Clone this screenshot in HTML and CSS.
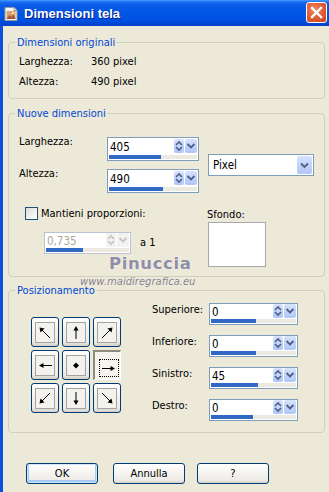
FILE: index.html
```html
<!DOCTYPE html>
<html lang="it">
<head>
<meta charset="utf-8">
<title>Dimensioni tela</title>
<link rel="stylesheet" href="styles.css">
</head>
<body>
<div class="window">
  <div class="titlebar">
    <svg class="app-icon" width="16" height="16" viewBox="0 0 16 16">
      <path d="M2 1.5h9l3 3v10H2z" fill="#f4f4f0" stroke="#9a9a9a"/>
      <path d="M11 1.5v3h3" fill="#dcdcdc" stroke="#9a9a9a"/>
      <rect x="3.5" y="5" width="9" height="8" fill="#d9a070"/>
      <path d="M3.5 13l3-4 2 2 2-3 2 5z" fill="#a4583a"/>
      <circle cx="10" cy="7" r="1.3" fill="#f6e2c4"/>
    </svg>
    <span class="title">Dimensioni tela</span>
    <div class="close">
      <svg width="13" height="13" viewBox="0 0 13 13"><path d="M2 2l9 9M11 2l-9 9" stroke="#fff" stroke-width="2.4" stroke-linecap="square"/></svg>
    </div>
  </div>

  <div class="main">
    <fieldset class="group g1">
      <legend>Dimensioni originali</legend>
      <div class="info-row"><span class="info-lbl">Larghezza:</span><span>360 pixel</span></div>
      <div class="info-row"><span class="info-lbl">Altezza:</span><span>490 pixel</span></div>
    </fieldset>

    <fieldset class="group g2">
      <legend>Nuove dimensioni</legend>
      <div class="nd-top">
        <div class="nd-fields">
          <span class="fld-lbl">Larghezza:</span>
          <div class="spin big">
            <div class="spin-top"><span class="spin-val">405</span><span class="ud"><svg width="10" height="14" viewBox="0 0 10 14"><path d="M2 6l3-3 3 3M2 8l3 3 3-3" fill="none" stroke="#4d6185" stroke-width="1.6"/></svg></span><span class="dd"><svg width="12" height="14" viewBox="0 0 12 14"><path d="M2.5 5l3.5 3.5 3.5-3.5" fill="none" stroke="#4d6185" stroke-width="1.8"/></svg></span></div>
            <div class="track"><div class="fill" style="width:52px"></div></div>
          </div>
          <span class="fld-lbl">Altezza:</span>
          <div class="spin big">
            <div class="spin-top"><span class="spin-val">490</span><span class="ud"><svg width="10" height="14" viewBox="0 0 10 14"><path d="M2 6l3-3 3 3M2 8l3 3 3-3" fill="none" stroke="#4d6185" stroke-width="1.6"/></svg></span><span class="dd"><svg width="12" height="14" viewBox="0 0 12 14"><path d="M2.5 5l3.5 3.5 3.5-3.5" fill="none" stroke="#4d6185" stroke-width="1.8"/></svg></span></div>
            <div class="track"><div class="fill" style="width:54px"></div></div>
          </div>
        </div>
        <div class="select">
          <span class="select-val">Pixel</span>
          <span class="select-btn"><svg width="15" height="18" viewBox="0 0 15 18"><path d="M4 7.5l3.5 3.5 3.5-3.5" fill="none" stroke="#4d6185" stroke-width="1.8"/></svg></span>
        </div>
      </div>
      <div class="nd-bottom">
        <div class="nd-left">
          <div class="check-row"><span class="checkbox"></span><span>Mantieni proporzioni:</span></div>
          <div class="ratio-row">
            <div class="spin small disabled">
              <div class="spin-top"><span class="spin-val">0,735</span><span class="ud"><svg width="10" height="14" viewBox="0 0 10 14"><path d="M2 6l3-3 3 3M2 8l3 3 3-3" fill="none" stroke="#c4c4c4" stroke-width="1.6"/></svg></span><span class="dd"><svg width="12" height="14" viewBox="0 0 12 14"><path d="M2.5 5l3.5 3.5 3.5-3.5" fill="none" stroke="#c4c4c4" stroke-width="1.8"/></svg></span></div>
              <div class="track"><div class="fill" style="width:37px"></div></div>
            </div>
            <span class="ratio-txt">a 1</span>
          </div>
        </div>
        <div class="nd-right">
          <span>Sfondo:</span>
          <div class="swatch"></div>
        </div>
      </div>
    </fieldset>

    <fieldset class="group g3">
      <legend>Posizionamento</legend>
      <div class="pos-wrap">
        <div class="pos-grid">
          <div class="pbtn"><span class="pin"><svg width="18" height="19" viewBox="0 0 18 19"><path d="M14 15L6 7" stroke="#000" stroke-width="1"/><path d="M3.5 4.5l5 1-4 4z" fill="#000"/></svg></span></div>
          <div class="pbtn"><span class="pin"><svg width="18" height="19" viewBox="0 0 18 19"><path d="M9 16V6" stroke="#000" stroke-width="1"/><path d="M9 3l2.5 4.5h-5z" fill="#000"/></svg></span></div>
          <div class="pbtn"><span class="pin"><svg width="18" height="19" viewBox="0 0 18 19"><path d="M4 15l8-8" stroke="#000" stroke-width="1"/><path d="M14.5 4.5l-1 5-4-4z" fill="#000"/></svg></span></div>
          <div class="pbtn"><span class="pin"><svg width="18" height="19" viewBox="0 0 18 19"><path d="M16 9.5H6" stroke="#000" stroke-width="1"/><path d="M3 9.5l4.5-2.5v5z" fill="#000"/></svg></span></div>
          <div class="pbtn"><span class="pin"><svg width="18" height="19" viewBox="0 0 18 19"><path d="M9 6.5l3 3-3 3-3-3z" fill="#000"/></svg></span></div>
          <div class="pbtn pressed"><span class="focus-rect"><svg width="18" height="15" viewBox="0 0 18 15"><path d="M2 7.5h10" stroke="#000" stroke-width="1"/><path d="M15 7.5l-4.5-2.5v5z" fill="#000"/></svg></span></div>
          <div class="pbtn"><span class="pin"><svg width="18" height="19" viewBox="0 0 18 19"><path d="M14 4l-8 8" stroke="#000" stroke-width="1"/><path d="M3.5 14.5l1-5 4 4z" fill="#000"/></svg></span></div>
          <div class="pbtn"><span class="pin"><svg width="18" height="19" viewBox="0 0 18 19"><path d="M9 3v10" stroke="#000" stroke-width="1"/><path d="M9 16l2.5-4.5h-5z" fill="#000"/></svg></span></div>
          <div class="pbtn"><span class="pin"><svg width="18" height="19" viewBox="0 0 18 19"><path d="M4 4l8 8" stroke="#000" stroke-width="1"/><path d="M14.5 14.5l-5-1 4-4z" fill="#000"/></svg></span></div>
        </div>
        <div class="pos-fields">
          <span class="fld-lbl">Superiore:</span>
          <div class="spin small">
            <div class="spin-top"><span class="spin-val">0</span><span class="ud"><svg width="10" height="14" viewBox="0 0 10 14"><path d="M2 6l3-3 3 3M2 8l3 3 3-3" fill="none" stroke="#4d6185" stroke-width="1.6"/></svg></span><span class="dd"><svg width="12" height="14" viewBox="0 0 12 14"><path d="M2.5 5l3.5 3.5 3.5-3.5" fill="none" stroke="#4d6185" stroke-width="1.8"/></svg></span></div>
            <div class="track"><div class="fill" style="width:45px"></div></div>
          </div>
          <span class="fld-lbl">Inferiore:</span>
          <div class="spin small">
            <div class="spin-top"><span class="spin-val">0</span><span class="ud"><svg width="10" height="14" viewBox="0 0 10 14"><path d="M2 6l3-3 3 3M2 8l3 3 3-3" fill="none" stroke="#4d6185" stroke-width="1.6"/></svg></span><span class="dd"><svg width="12" height="14" viewBox="0 0 12 14"><path d="M2.5 5l3.5 3.5 3.5-3.5" fill="none" stroke="#4d6185" stroke-width="1.8"/></svg></span></div>
            <div class="track"><div class="fill" style="width:45px"></div></div>
          </div>
          <span class="fld-lbl">Sinistro:</span>
          <div class="spin small">
            <div class="spin-top"><span class="spin-val">45</span><span class="ud"><svg width="10" height="14" viewBox="0 0 10 14"><path d="M2 6l3-3 3 3M2 8l3 3 3-3" fill="none" stroke="#4d6185" stroke-width="1.6"/></svg></span><span class="dd"><svg width="12" height="14" viewBox="0 0 12 14"><path d="M2.5 5l3.5 3.5 3.5-3.5" fill="none" stroke="#4d6185" stroke-width="1.8"/></svg></span></div>
            <div class="track"><div class="fill" style="width:47px"></div></div>
          </div>
          <span class="fld-lbl">Destro:</span>
          <div class="spin small">
            <div class="spin-top"><span class="spin-val">0</span><span class="ud"><svg width="10" height="14" viewBox="0 0 10 14"><path d="M2 6l3-3 3 3M2 8l3 3 3-3" fill="none" stroke="#4d6185" stroke-width="1.6"/></svg></span><span class="dd"><svg width="12" height="14" viewBox="0 0 12 14"><path d="M2.5 5l3.5 3.5 3.5-3.5" fill="none" stroke="#4d6185" stroke-width="1.8"/></svg></span></div>
            <div class="track"><div class="fill" style="width:42px"></div></div>
          </div>
        </div>
      </div>
    </fieldset>

    <div class="buttons">
      <button class="btn default">OK</button>
      <button class="btn b2">Annulla</button>
      <button class="btn b3">?</button>
    </div>
  </div>

  <div class="wm-name">Pinuccia</div>
  <div class="wm-url">www.maidiregrafica.eu</div>
</div>
</body>
</html>
```

FILE: styles.css
```css
html, body {
  margin: 0;
  padding: 0;
  background: #ECE9D8;
}
body {
  font-family: "DejaVu Sans Condensed", "Liberation Sans", Arial, sans-serif;
  font-size: 11px;
  color: #000;
  width: 329px;
  height: 492px;
  overflow: hidden;
}
.window {
  position: relative;
  width: 329px;
  height: 492px;
  display: flex;
  flex-direction: column;
  background: #ECE9D8;
}
.titlebar {
  height: 26px;
  flex: none;
  display: flex;
  align-items: center;
  background: linear-gradient(to bottom, #4A9BFF 0%, #1A6CF0 8%, #0A5CE8 20%, #0055E5 55%, #0050E0 80%, #003FC8 100%);
  position: relative;
}
.app-icon {
  margin-left: 3px;
  margin-top: 1px;
  flex: none;
}
.title {
  margin-left: 5px;
  font-family: "Liberation Sans", Arial, sans-serif;
  font-weight: bold;
  font-size: 13px;
  color: #fff;
  text-shadow: 1px 1px 0 #0A1E8C;
  flex: 1;
}
.close {
  width: 19px;
  height: 19px;
  margin-right: 2px;
  margin-top: -1px;
  border: 1px solid #fff;
  border-radius: 3px;
  background: radial-gradient(circle at 40% 35%, #EC8A68 0%, #E2623A 45%, #C8401C 100%);
  display: flex;
  align-items: center;
  justify-content: center;
}
.main {
  flex: 1;
  border-left: 3px solid #0A4FE0;
  padding: 10px 0 0 5px;
  display: flex;
  flex-direction: column;
}
.group {
  box-sizing: border-box;
  width: 317px;
  margin: 0;
  border: 1px solid #D0D0BF;
  border-radius: 4px;
  padding: 0 10px;
  min-width: 0;
}
.group legend {
  color: #0046D5;
  padding: 0 2px;
  margin-left: -4px;
  line-height: 13px;
}
.g1 {
  padding-top: 6px;
  padding-bottom: 10px;
}
.info-row {
  display: flex;
  line-height: 13px;
}
.info-row + .info-row {
  margin-top: 7px;
}
.info-lbl {
  width: 72px;
}
.g2 {
  margin-top: 8px;
  padding-top: 17px;
  padding-bottom: 9px;
}
.nd-top {
  display: flex;
  align-items: center;
}
.nd-fields {
  display: grid;
  grid-template-columns: 88px 92px;
  row-gap: 8px;
}
.fld-lbl {
  line-height: 13px;
  margin-top: -2px;
}
.spin {
  box-sizing: border-box;
  border: 1px solid #7F9DB9;
  background: #fff;
  display: flex;
  flex-direction: column;
}
.spin.big {
  width: 92px;
  height: 24px;
}
.spin.small {
  width: 89px;
  height: 22px;
}
.spin-top {
  flex: 1;
  display: flex;
  align-items: flex-start;
  min-height: 0;
}
.spin-val {
  flex: 1;
  padding-left: 2px;
  padding-top: 3px;
  line-height: 13px;
  font-size: 11.5px;
}
.spin.small .spin-val {
  padding-top: 2px;
}
.ud, .dd {
  display: flex;
  align-items: center;
  justify-content: center;
  height: 14px;
  margin-top: 1px;
  border-radius: 2px;
  background: linear-gradient(to bottom, #D8E3FC 0%, #C3D3FB 50%, #B1C6F5 100%);
}
.spin.small .ud, .spin.small .dd {
  margin-top: 0;
}
.ud {
  width: 10px;
}
.dd {
  width: 12px;
  margin-left: 1px;
  margin-right: 1px;
}
.track {
  height: 4px;
  margin: 0 1px 1px 1px;
  background: #ECEAE0;
  flex: none;
}
.fill {
  height: 4px;
  background: #316AC5;
}
.spin.disabled {
  border-color: #BAC4D0;
}
.spin.disabled .spin-val {
  color: #ACA899;
}
.spin.disabled .ud, .spin.disabled .dd {
  background: #F2F2F0;
}
.select {
  box-sizing: border-box;
  width: 108px;
  height: 22px;
  margin-left: 9px;
  border: 1px solid #7F9DB9;
  background: #fff;
  display: flex;
  align-items: center;
}
.select-val {
  flex: 1;
  padding-left: 4px;
  font-size: 11.5px;
}
.select-btn {
  width: 15px;
  height: 18px;
  margin: 1px;
  border-radius: 2px;
  background: linear-gradient(to bottom, #D8E3FC 0%, #C3D3FB 50%, #B1C6F5 100%);
  display: flex;
}
.nd-bottom {
  display: flex;
  margin-top: 14px;
}
.nd-left {
  width: 188px;
}
.check-row {
  display: flex;
  align-items: center;
  padding-left: 6px;
  line-height: 13px;
}
.checkbox {
  box-sizing: border-box;
  width: 13px;
  height: 13px;
  border: 1px solid #1C5180;
  background: linear-gradient(135deg, #DCDCD7 0%, #FFFFFF 100%);
  margin-right: 3px;
}
.ratio-row {
  display: flex;
  align-items: center;
  margin-top: 12px;
  padding-left: 25px;
}
.spin.small.disabled {
  width: 87px;
}
.ratio-txt {
  margin-left: 9px;
  margin-top: -2px;
}
.nd-right {
  display: flex;
  flex-direction: column;
  line-height: 13px;
  padding-top: 1px;
}
.swatch {
  box-sizing: border-box;
  width: 58px;
  height: 45px;
  margin-left: 1px;
  margin-top: 1px;
  background: #fff;
  border: 1px solid #A7A6AA;
}
.g3 {
  margin-top: 7px;
  padding-top: 6px;
  padding-bottom: 11px;
}
.pos-wrap {
  display: flex;
  align-items: flex-start;
}
.pos-grid {
  display: grid;
  grid-template-columns: repeat(3, 28px);
  grid-auto-rows: 30px;
  gap: 3px;
  margin-left: 12px;
  margin-top: 14px;
}
.pbtn {
  box-sizing: border-box;
  border: 1px solid #003C74;
  border-radius: 3px;
  background: linear-gradient(to bottom, #FFFFFF 0%, #F4F3EE 40%, #ECEBE6 85%, #D6D0C5 100%);
  display: flex;
  align-items: center;
  justify-content: center;
}
.pin {
  box-sizing: border-box;
  width: 20px;
  height: 21px;
  border: 1px solid #A3A3A3;
  background: #F3F2ED;
  display: flex;
  align-items: center;
  justify-content: center;
}
.pbtn.pressed {
  border-radius: 0;
  border-style: solid;
  border-width: 2px 1px 1px 2px;
  border-color: #8E8B7C #FFFFFF #FFFFFF #8E8B7C;
  background: #F5F4EF;
  align-items: flex-start;
  justify-content: flex-start;
  padding: 7px 0 0 4px;
}
.focus-rect {
  box-sizing: border-box;
  width: 20px;
  height: 18px;
  border: 1px dotted #000;
  display: flex;
  align-items: center;
  justify-content: center;
}
.pos-fields {
  display: grid;
  grid-template-columns: 57px 89px;
  row-gap: 10px;
  margin-left: 31px;
}
.pos-fields .fld-lbl {
  margin-top: 0;
}
.buttons {
  display: flex;
  margin-top: 30px;
  padding-left: 18px;
}
.btn {
  box-sizing: border-box;
  width: 72px;
  height: 21px;
  padding: 0;
  font-family: inherit;
  font-size: 11px;
  color: #000;
  border: 1px solid #003C74;
  border-radius: 3px;
  background: linear-gradient(to bottom, #FFFFFF 0%, #F5F4F0 50%, #ECEBE6 85%, #D6D0C5 100%);
}
.btn.default {
  box-shadow: inset 0 0 0 1px #CEE7FF, inset 0 -1px 0 2px #A8C8F4;
}
.b2 {
  margin-left: 15px;
}
.b3 {
  margin-left: 12px;
}
.wm-name {
  position: absolute;
  left: 109px;
  top: 254px;
  font-family: "DejaVu Sans", sans-serif;
  font-weight: bold;
  font-size: 16.5px;
  letter-spacing: 0.6px;
  color: rgba(120, 116, 150, 0.82);
  text-shadow: 0 0 1px rgba(255, 255, 255, 0.9);
}
.wm-url {
  position: absolute;
  left: 80px;
  top: 276px;
  font-family: "DejaVu Sans", sans-serif;
  font-style: italic;
  font-size: 10px;
  color: rgba(115, 112, 138, 0.85);
}
```
